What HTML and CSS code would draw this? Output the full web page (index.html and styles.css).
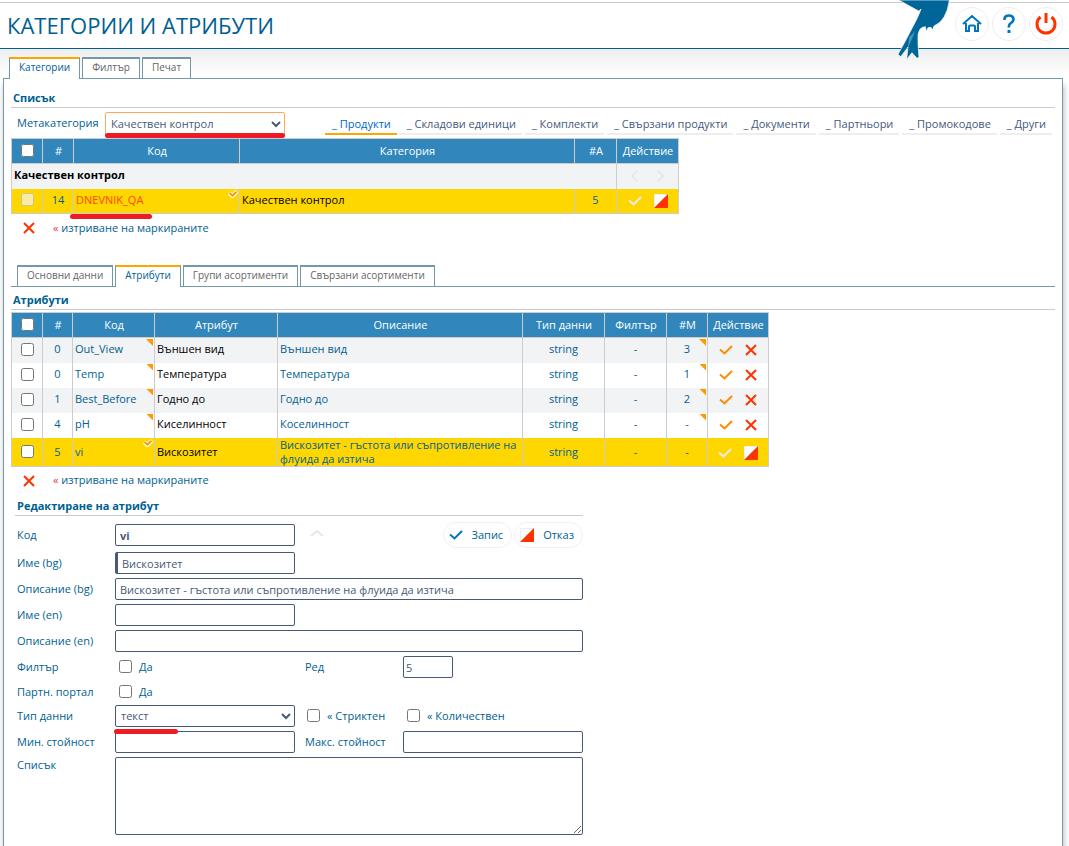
FILE: index.html
```html
<!DOCTYPE html>
<html lang="bg">
<head>
<meta charset="utf-8">
<title>Категории и атрибути</title>
<link rel="stylesheet" href="styles.css">
</head>
<body>
<svg class="defs" aria-hidden="true">
  <symbol id="i-check" viewBox="0 0 14 10"><path d="M1 4.5 5.5 8.5 13 1" fill="none" stroke="currentColor" stroke-width="2"/></symbol>
  <symbol id="i-x" viewBox="0 0 12 12"><path d="M1 1 11 11M11 1 1 11" fill="none" stroke="currentColor" stroke-width="2"/></symbol>
  <symbol id="i-cancel" viewBox="0 0 14 14"><path d="M0 0H14V14H0Z" fill="#eceef0"/><path d="M1 1H13L1 13Z" fill="#fff"/><path d="M14 0V14H0Z" fill="#ff3300"/></symbol>
  <symbol id="i-mini" viewBox="0 0 10 8"><path d="M1 3 4.5 6 9 1.5" fill="none" stroke="#fff" stroke-width="4"/><path d="M1.5 3 4.5 5.7 8.5 1.7" fill="none" stroke="#ff9900" stroke-width="2"/></symbol>
</svg>
<div class="page">
<header class="header">
  <h1 class="title">КАТЕГОРИИ И АТРИБУТИ</h1>
  <svg class="bird" viewBox="174 0 156 180" aria-hidden="true"><path d="M176 0 236 33Q240 31 243 27Q236 48 216 85Q196 125 174 163L182 170Q196 152 204 141L200 178Q208 168 216 158L231 175 237 172Q233 130 234 104Q238 84 248 82L256 80 259 94 264 83 273 82 277 90 282 78Q320 62 328 0Z" fill="#006699" stroke="#fff" stroke-width="2"/><path d="M226 92 203 146 208 112Z" fill="#fff" opacity=".3"/></svg>
  <nav class="tools">
    <a class="tool" href="#" aria-label="Начало"><svg width="20" height="19" viewBox="0 0 20 19"><path d="M1 10 10 2 19 10M4 9V17H7V12.5Q7 11.5 8 11.5H12Q13 11.5 13 12.5V17H16V9" fill="none" stroke="#0077bb" stroke-width="2"/></svg></a>
    <a class="tool" href="#" aria-label="Помощ"><svg width="12" height="20" viewBox="0 0 12 20"><path d="M1.500 6V4.500Q2 1.500 6 1.500T10.500 5Q10.500 7.500 8 9T6 13.500" fill="none" stroke="#0077bb" stroke-width="2.600"/><path d="M4.500 16H7.500V19H4.500Z" fill="#0077bb"/></svg></a>
    <a class="tool" href="#" aria-label="Изход"><svg width="22" height="22" viewBox="0 0 22 22"><path d="M5.500 4A9 9 0 1 0 16.500 4M11 0V10" fill="none" stroke="#ff3300" stroke-width="3"/></svg></a>
  </nav>
</header>
<main class="main">
  <nav class="tabs">
    <a class="tab tab-on" href="#">Категории</a><a class="tab" href="#">Филтър</a><a class="tab" href="#">Печат</a>
  </nav>
  <div class="panel">
    <h2 class="heading">Списък</h2>
    <div class="filter">
      <label class="filter-label" for="meta">Метакатегория</label>
      <div class="marked"><select class="field meta" id="meta"><option>Качествен контрол</option></select><span class="mark mark-full"></span></div>
      <nav class="links">
        <a class="link link-on" href="#">_ Продукти</a><a class="link" href="#">_ Складови единици</a><a class="link" href="#">_ Комплекти</a><a class="link" href="#">_ Свързани продукти</a><a class="link" href="#">_ Документи</a><a class="link" href="#">_ Партньори</a><a class="link" href="#">_ Промокодове</a><a class="link" href="#">_ Други</a>
      </nav>
    </div>
    <table class="grid cats">
      <colgroup><col class="w-check"><col class="w-num"><col class="w-code"><col class="w-cat"><col class="w-a"><col class="w-act"></colgroup>
      <thead><tr><th><input type="checkbox" aria-label="Всички"></th><th>#</th><th>Код</th><th>Категория</th><th>#A</th><th>Действие</th></tr></thead>
      <tbody>
        <tr class="alt"><td class="group" colspan="5">Качествен контрол</td><td><div class="acts arrows"><svg width="8" height="12" viewBox="0 0 8 12"><path d="M7 1 2 6 7 11" fill="none" stroke="currentColor" stroke-width="2"/></svg><svg width="8" height="12" viewBox="0 0 8 12"><path d="M1 1 6 6 1 11" fill="none" stroke="currentColor" stroke-width="2"/></svg></div></td></tr>
        <tr class="sel"><td class="c"><input type="checkbox" disabled aria-label="14"></td><td class="c">14</td><td class="red">DNEVNIK_QA<svg class="mini"><use href="#i-mini"/></svg><span class="mark mark-code"></span></td><td class="name">Качествен контрол</td><td class="c">5</td><td><div class="acts"><svg class="ic-check pale"><use href="#i-check"/></svg><svg class="ic-cancel"><use href="#i-cancel"/></svg></div></td></tr>
      </tbody>
    </table>
    <div class="remove"><svg class="ic-x"><use href="#i-x"/></svg><a class="remove-link" href="#"><span class="quote">«</span> изтриване на маркираните</a></div>
    <nav class="tabs subtabs">
      <a class="tab" href="#">Основни данни</a><a class="tab tab-on" href="#">Атрибути</a><a class="tab" href="#">Групи асортименти</a><a class="tab" href="#">Свързани асортименти</a>
    </nav>
    <h2 class="heading attr-heading">Атрибути</h2>
    <table class="grid attrs">
      <colgroup><col class="w-check"><col class="w-n2"><col class="w-code2"><col class="w-attr"><col class="w-desc"><col class="w-type"><col class="w-filter"><col class="w-m"><col class="w-act2"></colgroup>
      <thead><tr><th><input type="checkbox" aria-label="Всички"></th><th>#</th><th>Код</th><th>Атрибут</th><th>Описание</th><th>Тип данни</th><th>Филтър</th><th>#M</th><th>Действие</th></tr></thead>
      <tbody>
        <tr class="alt"><td class="c"><input type="checkbox" aria-label="Out_View"></td><td class="c">0</td><td>Out_View<i class="corner"></i></td><td class="name">Външен вид</td><td>Външен вид</td><td class="c">string</td><td class="c">-</td><td class="c">3<i class="corner"></i></td><td><div class="acts"><svg class="ic-check"><use href="#i-check"/></svg><svg class="ic-x"><use href="#i-x"/></svg></div></td></tr>
        <tr><td class="c"><input type="checkbox" aria-label="Temp"></td><td class="c">0</td><td>Temp<i class="corner"></i></td><td class="name">Температура</td><td>Температура</td><td class="c">string</td><td class="c">-</td><td class="c">1<i class="corner"></i></td><td><div class="acts"><svg class="ic-check"><use href="#i-check"/></svg><svg class="ic-x"><use href="#i-x"/></svg></div></td></tr>
        <tr class="alt"><td class="c"><input type="checkbox" aria-label="Best_Before"></td><td class="c">1</td><td>Best_Before<i class="corner"></i></td><td class="name">Годно до</td><td>Годно до</td><td class="c">string</td><td class="c">-</td><td class="c">2<i class="corner"></i></td><td><div class="acts"><svg class="ic-check"><use href="#i-check"/></svg><svg class="ic-x"><use href="#i-x"/></svg></div></td></tr>
        <tr><td class="c"><input type="checkbox" aria-label="pH"></td><td class="c">4</td><td>pH<i class="corner"></i></td><td class="name">Киселинност</td><td>Коселинност</td><td class="c">string</td><td class="c">-</td><td class="c">-<i class="corner"></i></td><td><div class="acts"><svg class="ic-check"><use href="#i-check"/></svg><svg class="ic-x"><use href="#i-x"/></svg></div></td></tr>
        <tr class="sel"><td class="c"><input type="checkbox" aria-label="vi"></td><td class="c">5</td><td>vi<svg class="mini"><use href="#i-mini"/></svg></td><td class="name">Вискозитет</td><td>Вискозитет - гъстота или съпротивление на флуида да изтича</td><td class="c">string</td><td class="c">-</td><td class="c">-</td><td><div class="acts"><svg class="ic-check pale"><use href="#i-check"/></svg><svg class="ic-cancel"><use href="#i-cancel"/></svg></div></td></tr>
      </tbody>
    </table>
    <div class="remove"><svg class="ic-x"><use href="#i-x"/></svg><a class="remove-link" href="#"><span class="quote">«</span> изтриване на маркираните</a></div>
    <form class="editor">
      <h2 class="heading edit-heading">Редактиране на атрибут</h2>
      <div class="form">
        <label for="code">Код</label><input class="field bold" id="code" value="vi">
        <div class="buttons span2"><svg class="up" width="14" height="8" viewBox="0 0 14 8"><path d="M1 7 7 2 13 7" fill="none" stroke="#e4e6ea" stroke-width="2"/></svg><button class="btn" type="button"><svg class="ic-check"><use href="#i-check"/></svg>Запис</button><button class="btn" type="button"><svg class="ic-cancel"><use href="#i-cancel"/></svg>Отказ</button></div>
        <label for="nbg">Име (bg)</label><input class="field required" id="nbg" value="Вискозитет"><span class="span2"></span>
        <label for="dbg">Описание (bg)</label><input class="field span3" id="dbg" value="Вискозитет - гъстота или съпротивление на флуида да изтича">
        <label for="nen">Име (en)</label><input class="field" id="nen"><span class="span2"></span>
        <label for="den">Описание (en)</label><input class="field span3" id="den">
        <label for="flt">Филтър</label><label class="tick"><input type="checkbox" id="flt">Да</label><label for="ord">Ред</label><input class="field short" id="ord" value="5">
        <label for="prt">Партн. портал</label><label class="tick"><input type="checkbox" id="prt">Да</label><span class="span2"></span>
        <label for="typ">Тип данни</label><div class="marked"><select class="field" id="typ"><option>текст</option></select><span class="mark mark-type"></span></div><label class="tick tick-strict"><input type="checkbox">« Стриктен</label><label class="tick"><input type="checkbox">« Количествен</label>
        <label for="min">Мин. стойност</label><input class="field" id="min"><label for="max">Макс. стойност</label><input class="field" id="max">
        <label class="top" for="lst">Списък</label><textarea class="field area span3" id="lst"></textarea>
      </div>
    </form>
  </div>
</main>
</div>
</body>
</html>
```
FILE: styles.css
```css
* { box-sizing: border-box; }
body {
  margin: 0;
  background: #fff;
  color: #005f92;
  font: 11px/15px "Open Sans", "Noto Sans", sans-serif;
}
a { color: inherit; text-decoration: none; }
h1, h2 { margin: 0; }
svg { display: block; flex: none; }
input[type="checkbox"] { display: block; width: 13px; height: 13px; margin: 0; flex: none; }
.defs { position: absolute; width: 0; height: 0; }
.page { display: flex; flex-direction: column; min-height: 100vh; padding-top: 2px; overflow: hidden; }

.header {
  position: relative;
  display: flex;
  align-items: center;
  justify-content: space-between;
  height: 47px;
  padding: 0 6px 0 7px;
  border-top: 1px solid #ccc;
  border-bottom: 1px solid #00608f;
}
.title { padding-bottom: 2px; font-size: 22px; line-height: 32px; font-weight: 400; }
.bird { position: absolute; top: -3px; right: 119px; width: 52px; height: 60px; z-index: 1; }
.tools { display: flex; gap: 3px; padding-bottom: 4px; }
.tool {
  display: flex;
  align-items: center;
  justify-content: center;
  width: 34px;
  height: 34px;
  border: 1px solid #eee;
  border-radius: 50%;
}

.main {
  flex: 1;
  display: flex;
  flex-direction: column;
  padding: 8px 6px 0 3px;
  background: linear-gradient(#eee, #fff 26px);
}
.tabs { display: flex; gap: 2px; padding-left: 6px; }
.tab {
  position: relative;
  height: 21px;
  padding: 1px 9px 0;
  border: 1px solid #7298a9;
  border-width: 2px 1px 0;
  background: #fff;
  color: #666;
  font-size: 10px;
}
.tab-on { height: 22px; margin-bottom: -1px; border-top-color: #ffa500; color: #00609a; z-index: 1; }
.panel {
  flex: 1;
  padding: 11px 7px 10px;
  border: 1px solid #7298a9;
  border-bottom: 0;
  background: #fff;
  box-shadow: 1px 7px 6px #bbb;
}
.heading {
  padding: 0 2px 2px;
  border-bottom: 1px solid #ccc;
  font-size: 11px;
  line-height: 15px;
  font-weight: 700;
}
.filter { display: flex; justify-content: space-between; align-items: flex-start; height: 30px; padding: 4px 3px 0 6px; }
.filter-label { width: 88px; padding-top: 3px; flex: none; }
.links { display: flex; flex: 1; justify-content: flex-end; gap: 3px; padding-top: 4px; color: #46597c; white-space: nowrap; }
.link { padding: 0 6px 2px 7px; border-bottom: 2px solid #eee; }
.link-on { border-color: #ffa500; color: #0066cc; }

.field {
  display: block;
  width: 100%;
  height: 22px;
  margin: 0;
  padding: 2px 4px 0;
  border: 1px solid #465a78;
  border-radius: 2px;
  background: #fff;
  color: #465a78;
  font: inherit;
}
select.field { padding: 0 0 0 1px; }
select.meta { height: 25px; padding-bottom: 2px; border-color: #ffa85c; }
.marked { position: relative; width: 180px; flex: none; }
.mark { position: absolute; height: 5px; border-radius: 3px; background: #ed1c24; z-index: 2; }
.mark-full { left: 0; right: 0; bottom: -1px; }
.mark-code { left: -4px; bottom: -6px; width: 82px; }
.mark-type { left: -1px; bottom: -7px; width: 64px; }

.grid { border-collapse: collapse; table-layout: fixed; border: 1px solid #ccc; line-height: 14px; }
.cats { width: 668px; }
.attrs { width: 758px; margin-top: 2px; }
.w-check, .w-num { width: 31px; }
.w-n2 { width: 30px; }
.w-code { width: 166px; }
.w-cat { width: 335px; }
.w-a { width: 42px; }
.w-act { width: 62px; }
.w-code2, .w-type { width: 82px; }
.w-attr { width: 123px; }
.w-desc { width: 245px; }
.w-filter { width: 62px; }
.w-m { width: 41px; }
.w-act2 { width: 61px; }
.grid tr { height: 25px; }
.grid th { padding: 0 0 1px 1px; border: 1px solid #ccc; background: #3187bb; color: #fff; font-weight: 500; }
.grid th input { margin: 0 auto; }
.grid td { position: relative; padding: 0 2px 2px; border: 1px solid #ccc; border-width: 0 1px; }
.grid td input { margin: 0 9px; }
.grid .c { padding-right: 0; padding-left: 0; text-align: center; }
.attrs .sel td { padding-bottom: 0; }
.grid .alt { background: #f2f3f5; }
.grid .sel { background: #ffd700; }
.grid .name { color: #000; }
.grid .group { color: #000; font-weight: 700; }
.grid .red { color: #ff4500; }
.corner { position: absolute; top: 1px; right: 1px; width: 7px; height: 7px; background: #ff9900; clip-path: polygon(0 0, 100% 0, 100% 100%); }
.mini { position: absolute; top: 1px; right: 1px; width: 10px; height: 8px; }
.acts { display: flex; align-items: center; justify-content: center; gap: 12px; padding-top: 2px; color: #ff8c00; }
.arrows { gap: 19px; color: #e6e7ea; }
.pale { color: #eee; }
.ic-check { width: 14px; height: 10px; }
.ic-x { width: 12px; height: 12px; color: #ff3300; }
.ic-cancel { width: 14px; height: 14px; }
.remove { display: flex; align-items: center; gap: 18px; height: 28px; padding-left: 12px; }
.remove-link { padding-bottom: 2px; }
.quote { color: #e8343f; }

.subtabs { margin-top: 23px; border-bottom: 1px solid #7298a9; }
.attr-heading { padding-top: 5px; }

.editor { width: 568px; margin-left: 4px; }
.edit-heading { padding-top: 3px; }
.form {
  display: grid;
  grid-template-columns: 88px 180px 88px 180px;
  gap: 4px 10px;
  align-items: center;
  padding: 6px 0 0 2px;
}
.span2 { grid-column: span 2; }
.span3 { grid-column: span 3; }
.bold { font-weight: 700; }
.required { border-left-width: 3px; }
.short { width: 50px; padding-left: 2px; }
.area { height: 78px; resize: both; }
.top { align-self: start; }
.buttons { display: flex; align-items: center; gap: 2px; }
.up { margin: 0 auto 4px 5px; }
.btn {
  display: flex;
  align-items: center;
  gap: 9px;
  height: 26px;
  padding: 0 8px 0 5px;
  border: 1px solid #eef2f6;
  border-radius: 13px;
  background: #fff;
  color: #005f92;
  font: inherit;
}
.btn .ic-check { color: #0077bb; }
.tick { display: flex; align-items: center; gap: 7px; height: 19px; padding-left: 4px; white-space: nowrap; }
.tick-strict { padding-left: 2px; }
```
